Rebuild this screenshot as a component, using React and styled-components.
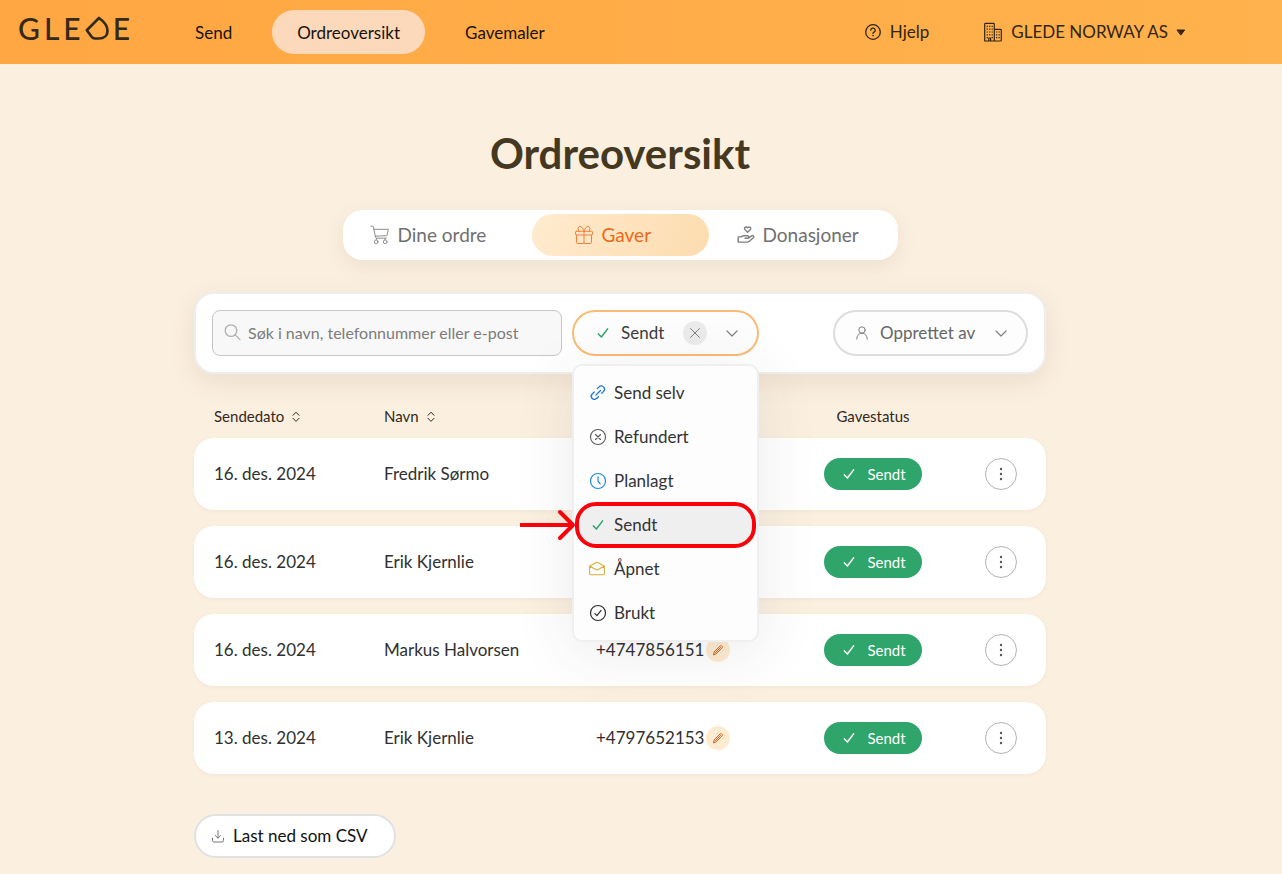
import React from "react";
import styled, { createGlobalStyle, css } from "styled-components";

const GlobalStyle = createGlobalStyle`
  *, *::before, *::after { box-sizing: border-box; }
  body {
    margin: 0;
    background: #fbefe0;
    color: #2b2b2b;
    font-family: Lato, "Open Sans", sans-serif;
    font-size: 16px;
    line-height: 24px;
  }
  button, input, select { font: inherit; color: inherit; }
  button { cursor: pointer; }
`;

/* ---------- icons ---------- */

const Svg = styled.svg`
  display: block;
  flex: none;
  fill: none;
  stroke: currentColor;
  stroke-linecap: round;
  stroke-linejoin: round;
`;

const Icon = ({ size = 16, box = 16, stroke = 1, children }) => (
  <Svg width={size} height={size} viewBox={`0 0 ${box} ${box}`} strokeWidth={stroke} aria-hidden="true">
    {children}
  </Svg>
);

const HelpIcon = () => (
  <Icon size={18} box={18} stroke={1.3}>
    <circle cx="9" cy="9" r="7.3" />
    <path d="M6.8 7.2a2.200 2.100 0 1 1 3.200 1.900c-.7.4-1 .7-1 1.300" />
    <circle cx="9" cy="12.700" r=".4" fill="currentColor" strokeWidth=".7" />
  </Icon>
);

const BuildingIcon = () => (
  <Icon size={20} box={20} stroke={1.2}>
    <path d="M1.700 19V2.200q0-.8.8-.8h8q.8 0 .8.800V19M11.300 7.300h6.200q.8 0 .8.800V18.200q0 .8-.8.800H1.700M5.800 19v-3h1.800v3" />
    <path
      strokeWidth="1.200"
      strokeLinecap="butt"
      strokeDasharray="1.300 1.200"
      d="M3.600 4.400h6.200M3.600 7.200h6.200M3.600 10h6.200M3.600 12.800h6.200M13 10h4M13 12.800h4M13 15.600h4M3.600 15.600h1.400M8.600 15.600h1.400"
    />
  </Icon>
);

const CaretIcon = () => (
  <Svg width="10" height="7" viewBox="0 0 10 7" aria-hidden="true">
    <path d="M1.300 1h7.400L5 5.800z" fill="currentColor" />
  </Svg>
);

const CartIcon = () => (
  <Icon size={20} box={20}>
    <path d="M.9 1.200h1.600q.7 0 .9.700l2.200 10.400q.2.900 1.100.9h9.600M3.700 4.300h14.700l-1.500 6.400L5.200 11.200" />
    <circle cx="6.200" cy="16.800" r="1.900" />
    <circle cx="15.200" cy="16.800" r="1.900" />
    <path d="M6.300 14.800 7 13.200M15 14.800v-1.600" />
  </Icon>
);

const GiftIcon = () => (
  <Icon size={20} box={20}>
    <rect x="1.500" y="6.300" width="17" height="3.700" rx=".8" />
    <path d="M2.500 10v7.600q0 .9.900.9h13.200q.9 0 .9-.9V10M10 6.300v12.200M10 6.200C8.900 2.900 7.500 1.200 5.900 1.400 3.900 1.700 3.500 4.400 4.800 6.300M10 6.200c1.100-3.300 2.500-5 4.100-4.800 2 .3 2.400 3 1.100 4.900" />
  </Icon>
);

const DonateIcon = () => (
  <Icon size={18} box={18} stroke={1.4}>
    <path d="M10.600 6.200 7.900 3.500C6.500 1.900 8.900 0 10.600 1.900 12.300 0 14.700 1.900 13.300 3.500z" />
    <path d="M8 12.300h2.400c1.800 0 1.800-2.500 0-2.500H6.300q-.7 0-1.200.4l-.9.700H1.200v5.200h9.200q.9 0 1.600-.6l4.300-3.700c1.300-1.200-.2-2.900-1.700-1.900l-3.500 2.400" />
  </Icon>
);

const SearchIcon = () => (
  <Icon size={18} box={18} stroke={1.3}>
    <circle cx="7" cy="6.600" r="5.800" />
    <path d="m11.300 10.900 4.700 4.700" />
  </Icon>
);

const CheckIcon = () => (
  <Icon size={14} box={14} stroke={1.5}>
    <path d="M2.400 7.900 5.400 11 11.600 2.900" />
  </Icon>
);

const CrossIcon = () => (
  <Icon size={12} box={12}>
    <path d="m1.500 1.500 9 9M10.500 1.500l-9 9" />
  </Icon>
);

const ChevronIcon = () => (
  <Icon size={14} box={14} stroke={1.2}>
    <path d="m2 5 5 5 5-5" />
  </Icon>
);

const UserIcon = () => (
  <Icon size={16} box={16}>
    <circle cx="8" cy="5" r="3.200" />
    <path d="M2.800 14.200c0-3.700 2.100-5.900 5.200-5.900s5.200 2.200 5.200 5.900" />
  </Icon>
);

const SortIcon = () => (
  <Icon size={12} box={12}>
    <path d="M3 5.300 6 2.200l3 3.100M3 8.300 6 11.400l3-3.100" />
  </Icon>
);

const LinkIcon = () => (
  <Icon size={18} box={18} stroke={1.3}>
    <path d="M6.900 11.100 11.500 6.500M8.300 4.600l1.700-1.700a3.100 3.100 0 0 1 4.700.2 3.200 3.200 0 0 1-.1 4.300l-1.800 1.800M5.200 8 3.300 9.900a3.200 3.200 0 0 0-.2 4.500 3.100 3.100 0 0 0 4.400.2l2-1.900" />
  </Icon>
);

const CancelIcon = () => (
  <Icon size={18} box={18} stroke={1.1}>
    <circle cx="9" cy="9" r="7.500" />
    <path d="m6.500 6.500 5 5M11.500 6.500l-5 5" />
  </Icon>
);

const ClockIcon = () => (
  <Icon size={18} box={18} stroke={1.2}>
    <circle cx="9" cy="9" r="7.500" />
    <path d="M9 4.800v4.400l2.200 2.600" />
  </Icon>
);

const MailOpenIcon = () => (
  <Icon size={18} box={18} stroke={1.1}>
    <path d="M.6 6.200 7.300 2.400q.7-.3 1.400 0l6.700 3.800v7.600q0 .9-.9.900H1.500q-.9 0-.9-.9zM.8 6.300 7.400 9.800q.6.300 1.200 0l6.600-3.500" />
  </Icon>
);

const DoneIcon = () => (
  <Icon size={18} box={18} stroke={1.2}>
    <circle cx="9" cy="9" r="7.500" />
    <path d="m5.900 9.600 2 2 4.200-5.200" />
  </Icon>
);

const PencilIcon = () => (
  <Icon size={12} box={12}>
    <path d="M1.500 10.500 2.300 7.800 8.300 1.800q.6-.5 1.200 0l.7.700q.5.600 0 1.200L4.200 9.700zM3.200 8.900 8.600 3.400" />
  </Icon>
);

const DotsIcon = () => (
  <Svg width="4" height="14" viewBox="0 0 4 14" aria-hidden="true">
    <g fill="currentColor" stroke="none">
      <circle cx="2" cy="2" r="1.200" />
      <circle cx="2" cy="7" r="1.200" />
      <circle cx="2" cy="12" r="1.200" />
    </g>
  </Svg>
);

const DownloadIcon = () => (
  <Icon size={14} box={14}>
    <path d="M7 1.500v7.500M4.300 6.500 7 9.200l2.700-2.700M1.500 9.200v2.400q0 1.400 1.400 1.400h8.200q1.400 0 1.400-1.400V9.200" />
  </Icon>
);

/* ---------- header ---------- */

const Header = styled.header`
  display: flex;
  align-items: center;
  height: 64px;
  padding: 0 96px 0 18px;
  background: linear-gradient(90deg, #ffa743, #ffb24d);
`;

const Logo = styled.a`
  display: flex;
  align-items: center;
  gap: 4px;
  width: 152px;
  height: 24px;
  margin-bottom: 8px;
  color: #35291a;
  font-size: 30px;
  font-weight: 500;
  line-height: 24px;
  text-decoration: none;
`;

const Nav = styled.nav`
  display: flex;
  gap: 15px;
`;

const NavLink = styled.a`
  height: 44px;
  padding: 0 25px;
  border-radius: 22px;
  background: ${(p) => (p.$active ? "#fcd9bb" : "transparent")};
  color: #1a1208;
  font-size: 17px;
  line-height: 46px;
  text-decoration: none;
`;

const HeaderTools = styled.div`
  display: flex;
  align-items: center;
  gap: 54px;
  margin-left: auto;
  color: #33250f;
  font-size: 17px;
`;

const toolStyles = css`
  display: flex;
  align-items: center;
  gap: 8px;
  padding: 0;
  border: 0;
  background: none;
  color: inherit;
  line-height: 26px;
  text-decoration: none;
`;

const ToolLink = styled.a`
  ${toolStyles}
`;

const ToolButton = styled.button`
  ${toolStyles}
`;

/* ---------- page ---------- */

const Main = styled.main`
  display: flex;
  flex-direction: column;
  align-items: center;
  padding: 65px 42px 16px 0;
`;

const Title = styled.h1`
  margin: 0 0 33px;
  color: #453820;
  font-size: 42px;
  font-weight: 700;
  line-height: 48px;
`;

const Tabs = styled.div`
  display: grid;
  grid-template-columns: 185px 177px 185px;
  height: 50px;
  padding: 4px;
  border-radius: 20px;
  background: #fff;
  box-shadow: 0 6px 20px rgba(120, 100, 50, 0.1);
`;

const Tab = styled.button`
  display: flex;
  align-items: center;
  gap: 8px;
  padding: 0 0 0 ${(p) => p.$pad}px;
  border: 0;
  border-radius: 21px;
  background: ${(p) => (p.$active ? "linear-gradient(115deg, #ffebcf, #fddcae)" : "none")};
  color: ${(p) => (p.$active ? "#ee6a1b" : "#6f6f6f")};
  font-size: 19px;
`;

const Tint = styled.span`
  display: flex;
  color: ${(p) => p.$color};
`;

const Content = styled.div`
  width: 100%;
  max-width: 852px;
  margin-top: 32px;
`;

const FilterBar = styled.form`
  display: flex;
  gap: 10px;
  padding: 16px;
  border: 2px solid #eeeeee;
  border-radius: 20px;
  background: #fff;
  box-shadow: 0 8px 24px rgba(120, 100, 50, 0.12);
`;

const SearchField = styled.label`
  display: flex;
  align-items: center;
  gap: 6px;
  flex: 0 1 350px;
  height: 46px;
  padding: 0 11px;
  border: 1px solid #c6c6c6;
  border-radius: 8px;
  background: #f8f8f8;
  color: #b0b0b0;
`;

const SearchInput = styled.input`
  flex: 1;
  min-width: 0;
  padding: 0;
  border: 0;
  outline: 0;
  background: none;
  color: #333;
  &::placeholder { color: #7c7c7c; opacity: 1; }
`;

const Dropdown = styled.div`
  position: relative;
  width: ${(p) => p.$width}px;
  margin-left: ${(p) => (p.$end ? "auto" : "0")};
`;

const DropdownField = styled.div`
  display: flex;
  align-items: center;
  gap: ${(p) => (p.$active ? 11 : 10)}px;
  height: 46px;
  padding: 0 18px 0 ${(p) => (p.$active ? 22 : 19)}px;
  border: 2px solid ${(p) => (p.$active ? "#fbbb74" : "#dddddd")};
  border-radius: 23px;
  background: #fdfdfd;
  color: #808080;
`;

const DropdownSelect = styled.select`
  flex: 1;
  min-width: 0;
  padding: 0;
  border: 0;
  outline: 0;
  appearance: none;
  background: none;
  color: ${(p) => (p.$active ? "#3c3c3c" : "#666666")};
  font-size: 17px;
`;

const ClearButton = styled.button`
  display: grid;
  place-items: center;
  flex: none;
  width: 24px;
  height: 24px;
  margin-right: 7px;
  padding: 0;
  border: 0;
  border-radius: 50%;
  background: #ebebeb;
  color: #808080;
`;

const Menu = styled.ul`
  position: absolute;
  z-index: 2;
  top: 54px;
  left: 0;
  right: 0;
  margin: 0;
  padding: 5px 2px;
  border: 2px solid #efefef;
  border-radius: 10px;
  background: #fdfdfd;
  box-shadow: 0 10px 60px rgba(60, 60, 60, 0.1);
  list-style: none;
`;

const MenuItem = styled.li`
  position: relative;
`;

const MenuButton = styled.button`
  display: flex;
  align-items: center;
  gap: 7px;
  width: 100%;
  height: 44px;
  padding: 0 13px;
  border: 0;
  border-radius: 20px;
  background: ${(p) => (p.$selected ? "#efefef" : "none")};
  color: #333;
  font-size: 17px;
  text-align: left;
`;

const MenuIcon = styled.span`
  display: grid;
  place-items: center;
  width: 18px;
  color: ${(p) => p.$color};
`;

const Highlight = styled.span`
  position: absolute;
  inset: -1px;
  border: 4px solid #f90209;
  border-radius: 21px;
  pointer-events: none;
`;

const Pointer = styled.svg`
  position: absolute;
  top: 6px;
  right: 100%;
  fill: none;
  stroke: #f90209;
  stroke-width: 4;
  stroke-linecap: round;
  stroke-linejoin: round;
  pointer-events: none;
`;

const Table = styled.table`
  display: block;
  margin-top: 30px;
`;

const Head = styled.thead`
  display: block;
  margin-bottom: 10px;
`;

const Body = styled.tbody`
  display: flex;
  flex-direction: column;
  gap: 16px;
`;

const rowGrid = css`
  display: grid;
  grid-template-columns: 170fr 212fr 228fr 98px 95px;
  align-items: center;
  padding: 0 29px 0 20px;
`;

const HeadRow = styled.tr`
  ${rowGrid}
`;

const HeadCell = styled.th`
  display: flex;
  align-items: center;
  justify-content: ${(p) => (p.$center ? "center" : "flex-start")};
  padding: 0;
  color: #33281c;
  font-size: 15px;
  font-weight: 400;
`;

const SortButton = styled.button`
  display: flex;
  align-items: center;
  gap: 6px;
  padding: 0;
  border: 0;
  background: none;
`;

const Row = styled.tr`
  ${rowGrid}
  height: 72px;
  border-radius: 20px;
  background: #fff;
  box-shadow: 0 1px 4px rgba(120, 90, 40, 0.06);
`;

const Cell = styled.td`
  display: flex;
  align-items: center;
  justify-content: ${(p) => (p.$end ? "flex-end" : "flex-start")};
  gap: 2px;
  padding: 0;
  color: #303030;
  font-size: 17px;
`;

const EditButton = styled.button`
  display: grid;
  place-items: center;
  width: 24px;
  height: 24px;
  padding: 0;
  border: 0;
  border-radius: 50%;
  background: #feebd0;
  color: #d2652a;
`;

const Badge = styled.span`
  display: flex;
  align-items: center;
  justify-content: center;
  gap: 11px;
  width: 98px;
  height: 32px;
  padding-left: 2px;
  border-radius: 16px;
  background: #2fa56b;
  color: #fff;
  font-size: 15px;
`;

const MoreButton = styled.button`
  display: grid;
  place-items: center;
  width: 32px;
  height: 32px;
  padding: 0;
  border: 1px solid #b4b4b4;
  border-radius: 50%;
  background: #fff;
  color: #555;
`;

const ExportButton = styled.button`
  display: flex;
  align-items: center;
  gap: 8px;
  height: 44px;
  margin-top: 40px;
  padding: 0 26px 0 15px;
  border: 2px solid #dfe1e3;
  border-radius: 22px;
  background: #fff;
  color: #111;
  font-size: 17px;
`;

const options = [
  { label: "Send selv", icon: <LinkIcon />, color: "#1976d2" },
  { label: "Refundert", icon: <CancelIcon />, color: "#5a5a5a" },
  { label: "Planlagt", icon: <ClockIcon />, color: "#1e88e5" },
  { label: "Sendt", icon: <CheckIcon />, color: "#2fa36b", selected: true },
  { label: "Åpnet", icon: <MailOpenIcon />, color: "#d6ae3c" },
  { label: "Brukt", icon: <DoneIcon />, color: "#2b2b2b" },
];

const orders = [
  { date: "16. des. 2024", name: "Fredrik Sørmo" },
  { date: "16. des. 2024", name: "Erik Kjernlie" },
  { date: "16. des. 2024", name: "Markus Halvorsen", phone: "+4747856151" },
  { date: "13. des. 2024", name: "Erik Kjernlie", phone: "+4797652153" },
];

const StatusFilter = () => (
  <Dropdown $width={187}>
    <DropdownField $active>
      <Tint $color="#2fa36b"><CheckIcon /></Tint>
      <DropdownSelect $active aria-label="Gavestatus" defaultValue="Sendt">
        {options.map((o) => <option key={o.label}>{o.label}</option>)}
      </DropdownSelect>
      <ClearButton type="button" aria-label="Fjern filter"><CrossIcon /></ClearButton>
      <ChevronIcon />
    </DropdownField>
    <Menu>
      {options.map((o) => (
        <MenuItem key={o.label}>
          <MenuButton type="button" $selected={o.selected}>
            <MenuIcon $color={o.color}>{o.icon}</MenuIcon>
            {o.label}
          </MenuButton>
          {o.selected && (
            <>
              <Highlight />
              <Pointer width="58" height="32" viewBox="0 0 58 32" aria-hidden="true">
                <path strokeLinecap="butt" d="M2 16h52" />
                <path d="M42 3l13 13-13 13" />
              </Pointer>
            </>
          )}
        </MenuItem>
      ))}
    </Menu>
  </Dropdown>
);

export default function App() {
  return (
    <>
      <GlobalStyle />
      <Header>
        <Logo href="#" aria-label="Glede">
          <span>G</span>
          <span>L</span>
          <span>E</span>
          <Svg width="24" height="24" viewBox="0 0 24 24" strokeWidth="2.700" aria-hidden="true">
            <path d="M14 2 1.800 14.200 6.600 20.800q1.200 1.700 3.200 1.700h4.200c5.200 0 8.500-3.200 8.500-7.600 0-5.200-3.800-9.600-8.500-12.900z" />
          </Svg>
          <span>E</span>
        </Logo>
        <Nav>
          <NavLink href="#send">Send</NavLink>
          <NavLink href="#ordre" $active aria-current="page">Ordreoversikt</NavLink>
          <NavLink href="#maler">Gavemaler</NavLink>
        </Nav>
        <HeaderTools>
          <ToolLink href="#hjelp"><HelpIcon />Hjelp</ToolLink>
          <ToolButton type="button" aria-haspopup="menu"><BuildingIcon />GLEDE NORWAY AS<CaretIcon /></ToolButton>
        </HeaderTools>
      </Header>
      <Main>
        <Title>Ordreoversikt</Title>
        <Tabs role="tablist">
          <Tab role="tab" aria-selected="false" $pad={23}><Tint $color="#8f8f8f"><CartIcon /></Tint>Dine ordre</Tab>
          <Tab role="tab" aria-selected="true" $pad={42} $active><Tint $color="#f08040"><GiftIcon /></Tint>Gaver</Tab>
          <Tab role="tab" aria-selected="false" $pad={28}><Tint $color="#808080"><DonateIcon /></Tint>Donasjoner</Tab>
        </Tabs>
        <Content>
          <FilterBar>
            <SearchField>
              <SearchIcon />
              <SearchInput type="text" aria-label="Søk" placeholder="Søk i navn, telefonnummer eller e-post" />
            </SearchField>
            <StatusFilter />
            <Dropdown $width={195} $end>
              <DropdownField>
                <UserIcon />
                <DropdownSelect aria-label="Opprettet av" defaultValue="Opprettet av">
                  <option>Opprettet av</option>
                </DropdownSelect>
                <ChevronIcon />
              </DropdownField>
            </Dropdown>
          </FilterBar>
          <Table>
            <Head>
              <HeadRow>
                <HeadCell scope="col"><SortButton type="button">Sendedato<SortIcon /></SortButton></HeadCell>
                <HeadCell scope="col"><SortButton type="button">Navn<SortIcon /></SortButton></HeadCell>
                <HeadCell />
                <HeadCell scope="col" $center>Gavestatus</HeadCell>
                <HeadCell />
              </HeadRow>
            </Head>
            <Body>
              {orders.map((o, i) => (
                <Row key={i}>
                  <Cell>{o.date}</Cell>
                  <Cell>{o.name}</Cell>
                  <Cell>
                    {o.phone && (
                      <>
                        {o.phone}
                        <EditButton type="button" aria-label="Rediger nummer"><PencilIcon /></EditButton>
                      </>
                    )}
                  </Cell>
                  <Cell><Badge><CheckIcon />Sendt</Badge></Cell>
                  <Cell $end><MoreButton type="button" aria-label="Flere valg"><DotsIcon /></MoreButton></Cell>
                </Row>
              ))}
            </Body>
          </Table>
          <ExportButton type="button"><Tint $color="#777777"><DownloadIcon /></Tint>Last ned som CSV</ExportButton>
        </Content>
      </Main>
    </>
  );
}
